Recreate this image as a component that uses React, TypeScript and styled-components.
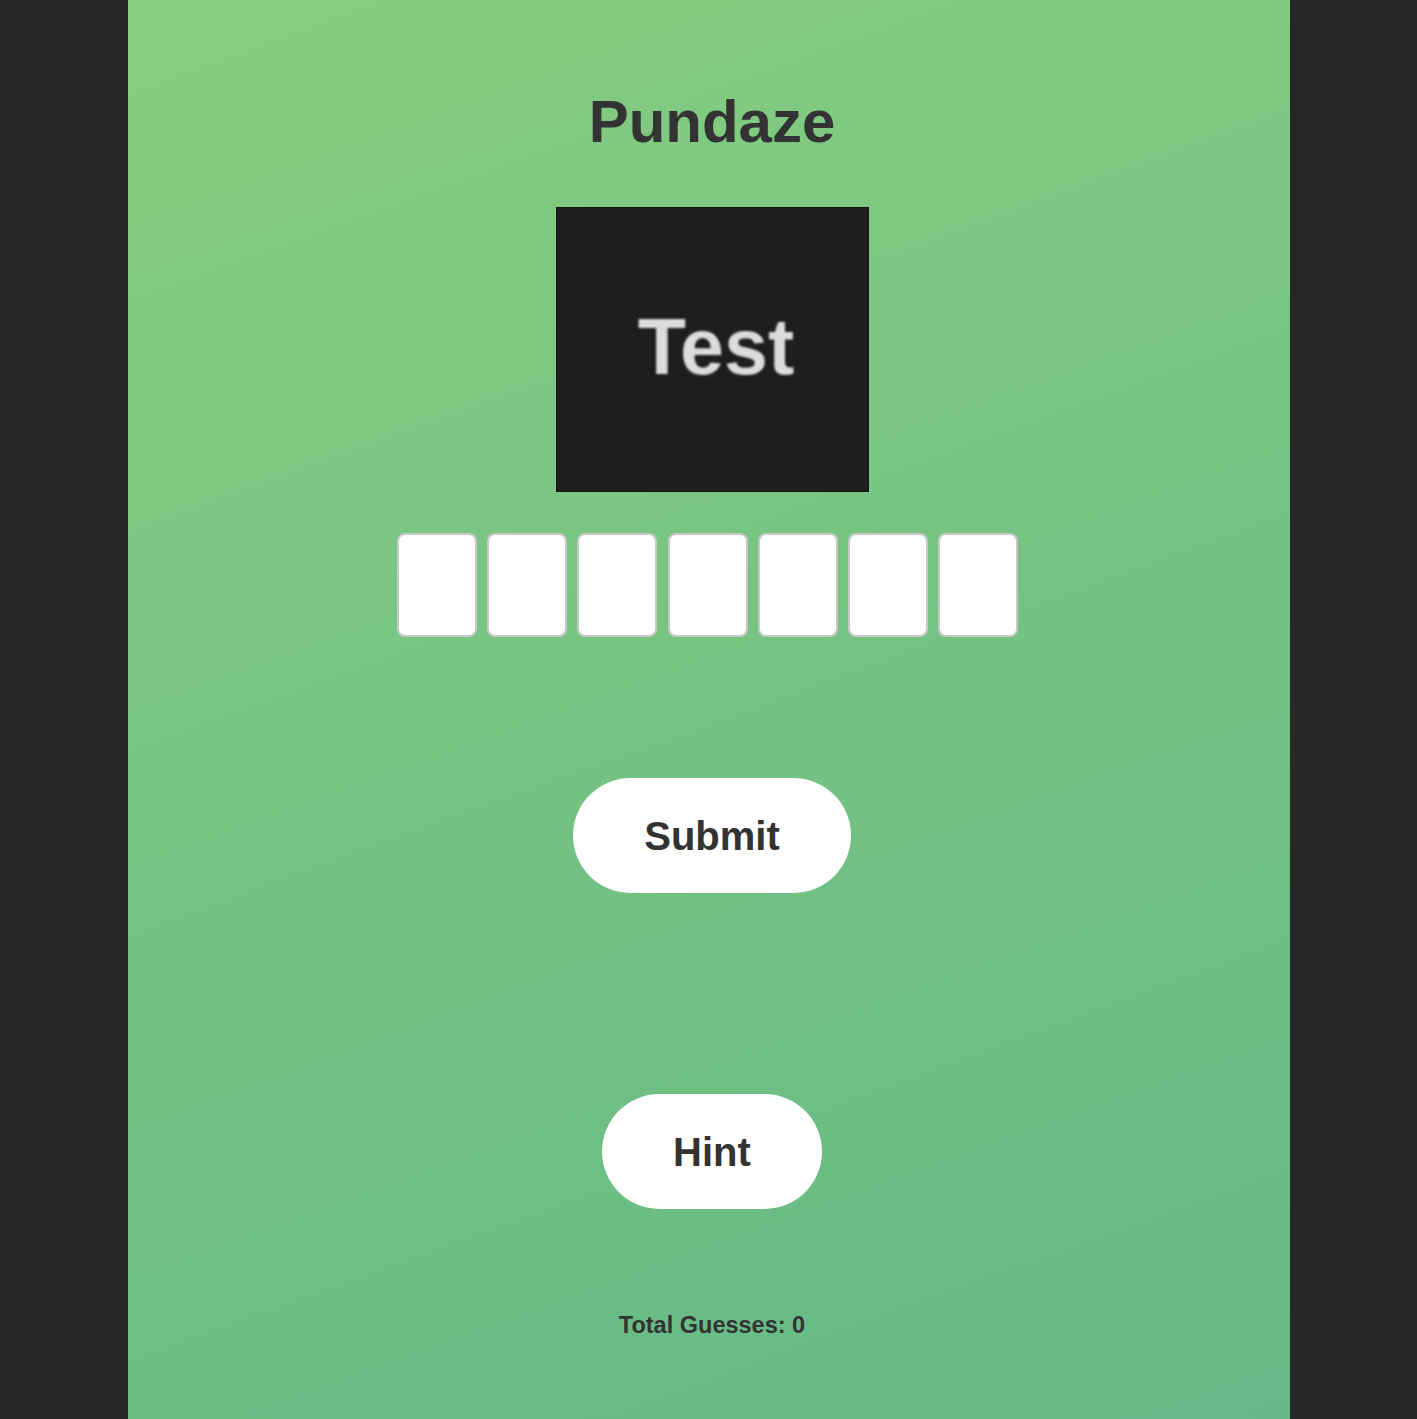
import * as React from 'react'
import styled, { createGlobalStyle } from 'styled-components'

const GlobalStyle = createGlobalStyle`
  html, body {
    margin: 0;
    padding: 0;
    background: #272727;
    font-family: 'Liberation Sans', Arial, Helvetica, sans-serif;
  }
`

const Page = styled.main`
  width: 1162px;
  min-height: 1419px;
  margin: 0 auto;
  background: linear-gradient(160deg, #87cd80 0%, #64b986 100%);
  display: flex;
  flex-direction: column;
  align-items: center;
  padding: 92px 0 0 7px;
  box-sizing: border-box;
`

const Title = styled.h1`
  margin: 0;
  font-size: 60px;
  line-height: 60px;
  font-weight: 700;
  color: #333;
`

const Puzzle = styled.div`
  margin-top: 55px;
  width: 313px;
  height: 285px;
  box-sizing: border-box;
  background: #1e1e1e;
  border: 1px solid #111;
  display: flex;
  align-items: center;
  justify-content: center;
`

const PuzzleText = styled.span`
  font-family: Helvetica, 'Liberation Sans', Arial, sans-serif;
  font-size: 79px;
  font-weight: 700;
  color: #dcdcdc;
  filter: blur(0.8px);
  transform: translate(4px, -3px);
`

const Tiles = styled.div`
  margin: 41px 9px 0 0;
  display: flex;
  gap: 10.3px;
`

const Tile = styled.input`
  width: 80px;
  height: 104px;
  box-sizing: border-box;
  border: 2px solid #c8c8c8;
  border-radius: 8px;
  background: #fff;
  padding: 0;
  font-family: 'Liberation Sans', Arial, sans-serif;
  font-size: 40px;
  font-weight: 700;
  text-align: center;
  color: #333;
  outline: none;
`

const PillButton = styled.button<{ $top: number }>`
  margin-top: ${(p) => p.$top}px;
  border: none;
  border-radius: 58px;
  background: #fff;
  color: #333;
  font-family: 'Liberation Sans', Arial, sans-serif;
  font-size: 40px;
  font-weight: 700;
  line-height: 46px;
  padding: 34.5px 71px;
  cursor: pointer;
`

const Counter = styled.p`
  margin: 103px 0 0;
  font-size: 23.5px;
  font-weight: 700;
  color: #333;
`

export default function App() {
  const letters = Array.from({ length: 7 })
  return (
    <>
      <GlobalStyle />
      <Page>
        <Title>Pundaze</Title>
        <Puzzle>
          <PuzzleText>Test</PuzzleText>
        </Puzzle>
        <Tiles>
          {letters.map((_, i) => (
            <Tile key={i} maxLength={1} aria-label={`Letter ${i + 1}`} />
          ))}
        </Tiles>
        <PillButton $top={141}>Submit</PillButton>
        <PillButton $top={201}>Hint</PillButton>
        <Counter>Total Guesses: 0</Counter>
      </Page>
    </>
  )
}
